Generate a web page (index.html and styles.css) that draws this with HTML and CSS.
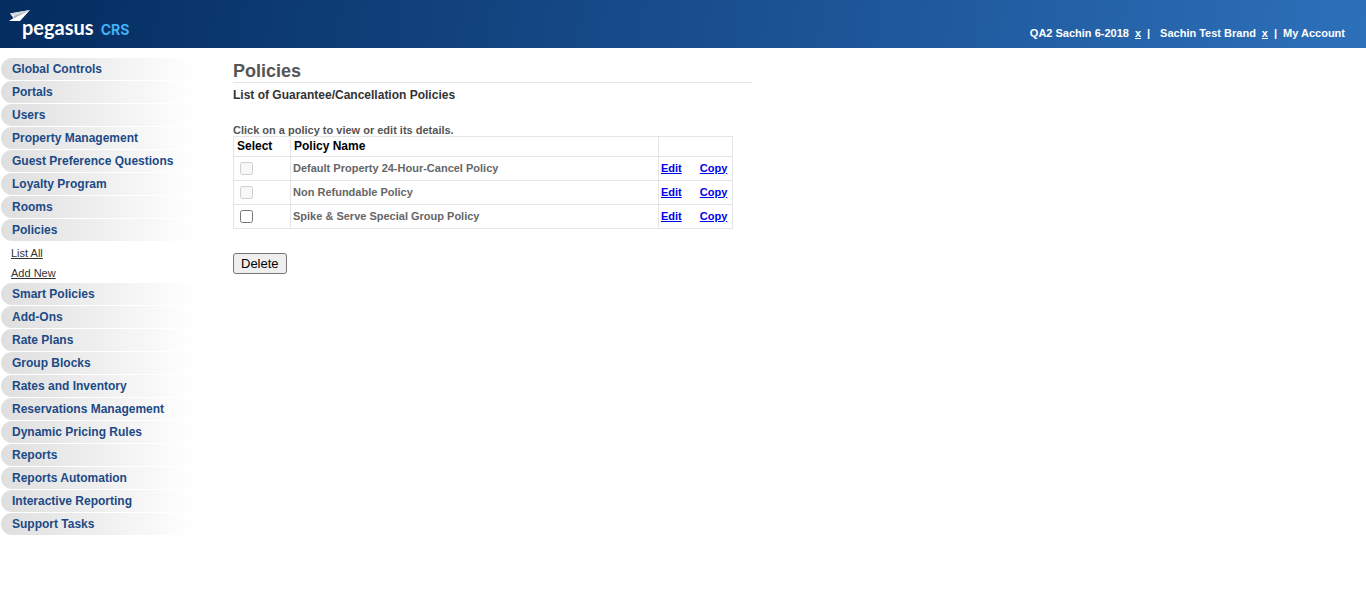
FILE: index.html
```html
<!DOCTYPE html>
<html lang="en">
<head>
<meta charset="utf-8">
<title>Pegasus CRS - Policies</title>
<link rel="stylesheet" href="styles.css">
</head>
<body>
<header class="topbar">
  <a class="logo" href="#" aria-label="pegasus CRS">
    <svg class="plane" width="22" height="13" viewBox="0 0 22 13" aria-hidden="true">
      <path d="M1 4.500 L21 1 L11 12 L0 12 L4.500 9 Z" fill="#fff"/>
      <path d="M1 4.500 L21 1 L5 7 Z" fill="#d5d8dc"/>
      <path d="M5 7 L21 1 L4.500 9.500 Z" fill="#a9aeb6"/>
    </svg>
    <span class="brand">pegasus</span><span class="product">CRS</span>
  </a>
  <div class="account">
    <span class="context">QA2 Sachin 6-2018</span><a class="close" href="#">x</a><span class="bar wide">|</span>
    <span class="context">Sachin Test Brand</span><a class="close" href="#">x</a><span class="bar">|</span>
    <a class="my-account" href="#">My Account</a>
  </div>
</header>
<div class="layout">
  <nav class="sidebar">
    <a class="item" href="#">Global Controls</a>
    <a class="item" href="#">Portals</a>
    <a class="item" href="#">Users</a>
    <a class="item" href="#">Property Management</a>
    <a class="item" href="#">Guest Preference Questions</a>
    <a class="item" href="#">Loyalty Program</a>
    <a class="item" href="#">Rooms</a>
    <a class="item" href="#">Policies</a>
    <div class="submenu">
      <a href="#">List All</a>
      <a href="#">Add New</a>
    </div>
    <a class="item" href="#">Smart Policies</a>
    <a class="item" href="#">Add-Ons</a>
    <a class="item" href="#">Rate Plans</a>
    <a class="item" href="#">Group Blocks</a>
    <a class="item" href="#">Rates and Inventory</a>
    <a class="item" href="#">Reservations Management</a>
    <a class="item" href="#">Dynamic Pricing Rules</a>
    <a class="item" href="#">Reports</a>
    <a class="item" href="#">Reports Automation</a>
    <a class="item" href="#">Interactive Reporting</a>
    <a class="item" href="#">Support Tasks</a>
  </nav>
  <main class="content">
    <h1>Policies</h1>
    <h2>List of Guarantee/Cancellation Policies</h2>
    <form>
      <p class="hint">Click on a policy to view or edit its details.</p>
      <table class="policies">
        <thead>
          <tr><th class="select">Select</th><th>Policy Name</th><td class="actions"></td></tr>
        </thead>
        <tbody>
          <tr>
            <td><input type="checkbox" id="p1" disabled></td>
            <td><label for="p1">Default Property 24-Hour-Cancel Policy</label></td>
            <td class="actions"><a href="#">Edit</a><a href="#">Copy</a></td>
          </tr>
          <tr>
            <td><input type="checkbox" id="p2" disabled></td>
            <td><label for="p2">Non Refundable Policy</label></td>
            <td class="actions"><a href="#">Edit</a><a href="#">Copy</a></td>
          </tr>
          <tr>
            <td><input type="checkbox" id="p3"></td>
            <td><label for="p3">Spike &amp; Serve Special Group Policy</label></td>
            <td class="actions"><a href="#">Edit</a><a href="#">Copy</a></td>
          </tr>
        </tbody>
      </table>
      <button class="delete" type="button">Delete</button>
    </form>
  </main>
</div>
</body>
</html>
```
FILE: styles.css
```css
* { box-sizing: border-box; }

body {
  margin: 0;
  background: #fff;
  color: #666;
  font-family: "Liberation Sans", Arial, sans-serif;
  font-size: 11px;
}

.topbar {
  display: flex;
  justify-content: space-between;
  align-items: flex-end;
  height: 48px;
  padding: 0 21px 8px 9px;
  background: linear-gradient(100deg, #042c5f 0%, #1c5496 60%, #2d70ba 100%);
  color: #fff;
}

.logo {
  display: flex;
  align-items: baseline;
  color: #fff;
  font-family: Lato, sans-serif;
  line-height: 20px;
  text-decoration: none;
}

.plane {
  align-self: flex-start;
  margin: -8px -9px 0 0;
}

.brand {
  font-size: 20px;
  font-weight: 700;
}

.product {
  margin-left: 7px;
  color: #41b0f5;
  font-family: Inter, sans-serif;
  font-size: 14px;
  font-weight: 700;
}

.account {
  display: flex;
  font-weight: 700;
  line-height: 14px;
}

.account a { color: #fff; }
.close { margin-left: 6px; }
.bar { margin: 0 6px; }
.bar.wide { margin-right: 10px; }
.account .my-account { text-decoration: none; }

.layout {
  display: flex;
  padding-top: 10px;
}

.sidebar {
  display: flex;
  flex: none;
  flex-direction: column;
  gap: 1px;
  width: 233px;
  padding-left: 1px;
}

.item {
  width: 194px;
  padding-left: 11px;
  border-radius: 11px 0 0 11px;
  background: linear-gradient(90deg, #dfdfdf, #fff);
  color: #1c4a86;
  font-size: 12px;
  font-weight: 700;
  line-height: 22px;
  text-decoration: none;
}

.submenu {
  display: flex;
  flex-direction: column;
  align-items: flex-start;
  padding: 1px 0 0 10px;
  height: 40px;
}

.submenu a {
  color: #333;
  line-height: 20px;
}

.content {
  flex: 1;
  max-width: 519px;
}

h1 {
  margin: 0;
  padding-top: 2px;
  border-bottom: 1px solid #e5e5e5;
  color: #555;
  font-size: 18px;
  line-height: 22px;
}

h2 {
  margin: 4px 0 0;
  color: #333;
  font-size: 12px;
  font-weight: 700;
  line-height: 16px;
}

.hint {
  margin: 21px 0 0;
  color: #555;
  font-weight: 700;
  line-height: 12px;
}

.policies {
  width: 500px;
  border-collapse: collapse;
  table-layout: fixed;
}

.policies th,
.policies td {
  height: 24px;
  padding: 0 2px 2px;
  border: 1px solid #e5e5e5;
  font-weight: 700;
  text-align: left;
}

.policies thead th,
.policies thead td {
  height: 20px;
  padding-left: 3px;
  color: #000;
  font-size: 12px;
  line-height: 16px;
}

.policies .select { width: 57px; }
.policies .actions { width: 74px; }
.policies .actions a { color: #00e; }
.policies .actions a + a { margin-left: 18px; }

.policies input {
  display: block;
  width: 13px;
  height: 13px;
  margin: 2px 0 0 4px;
}

.delete {
  margin-top: 24px;
  padding: 1px 7px;
  border: 1px solid #767676;
  border-radius: 3px;
  background: #efefef;
  color: #000;
  font-family: inherit;
  font-size: 13px;
  line-height: 17px;
}
```
